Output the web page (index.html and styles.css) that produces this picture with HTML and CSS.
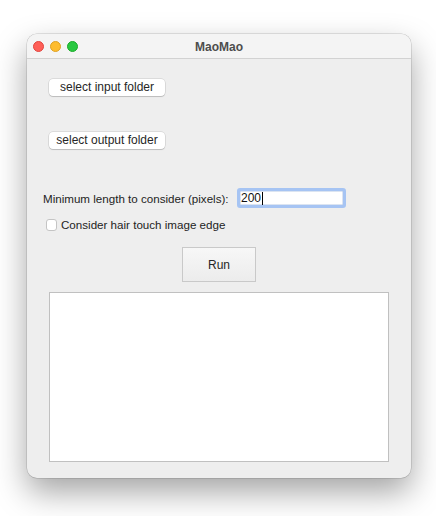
FILE: index.html
```html
<!DOCTYPE html>
<html>
<head>
<meta charset="utf-8">
<link rel="stylesheet" href="styles.css">
</head>
<body>
<div class="window">
  <div class="titlebar">
    <div class="lights">
      <span class="light red"></span>
      <span class="light yellow"></span>
      <span class="light green"></span>
    </div>
    <div class="title">MaoMao</div>
    <div></div>
  </div>
  <div class="content">
    <div class="btn btn-input">select input folder</div>
    <div class="btn btn-output">select output folder</div>
    <div class="row-length">
      <span class="label">Minimum length to consider (pixels):</span>
      <div class="field"><span class="value">200</span><span class="caret"></span></div>
    </div>
    <div class="row-check">
      <span class="checkbox"></span>
      <span class="label">Consider hair touch image edge</span>
    </div>
    <div class="run">Run</div>
    <div class="log"></div>
  </div>
</div>
</body>
</html>
```
FILE: styles.css
```css
html, body {
  margin: 0;
  padding: 0;
  background: #ffffff;
}
body {
  box-sizing: border-box;
  min-height: 516px;
  padding: 34px 0 0 27px;
  font-family: "Liberation Sans", Arial, sans-serif;
  font-size: 12px;
  color: #232323;
}
.window {
  width: 384px;
  height: 444px;
  border-radius: 10px;
  background: #eeeeee;
  box-shadow: 0 0 0 0.5px rgba(0,0,0,0.2), 0 14px 32px rgba(0,0,0,0.36);
  overflow: hidden;
  display: flex;
  flex-direction: column;
}
.titlebar {
  height: 24px;
  border-bottom: 1px solid #d2d2d2;
  background: #f4f4f4;
  display: grid;
  grid-template-columns: 1fr auto 1fr;
  align-items: center;
}
.lights {
  display: flex;
  gap: 6px;
  padding-left: 6px;
  padding-top: 1px;
}
.light {
  width: 11px;
  height: 11px;
  border-radius: 50%;
  box-sizing: border-box;
}
.red { background: #fe5f57; border: 0.5px solid #e0443e; }
.yellow { background: #febc2e; border: 0.5px solid #dea123; }
.green { background: #28c840; border: 0.5px solid #1aab29; }
.title {
  font-weight: bold;
  font-size: 12px;
  color: #4d4d4d;
  padding-top: 1px;
}
.content {
  display: flex;
  flex-direction: column;
  align-items: flex-start;
  padding: 0 22px;
}
.btn {
  width: 116px;
  height: 17px;
  line-height: 17px;
  box-sizing: border-box;
  text-align: center;
  background: #ffffff;
  border-radius: 4px;
  box-shadow: 0 0 0 0.5px rgba(0,0,0,0.16), 0 1px 1px rgba(0,0,0,0.14);
  color: #262626;
}
.btn-input { margin-top: 20px; }
.btn-output { margin-top: 36px; }
.label { font-size: 11.6px; }
.row-length {
  margin-top: 39px;
  margin-left: -6px;
  display: flex;
  align-items: center;
}
.row-length .label { width: 194px; }
.field {
  width: 109px;
  height: 20px;
  box-sizing: border-box;
  border: 3px solid #a6c4f3;
  border-radius: 3px;
  background: #ffffff;
  display: flex;
  align-items: center;
  padding-left: 1px;
  box-shadow: inset 0 0 0 0.5px #b8c9e4;
}
.value { color: #111; }
.caret {
  width: 1px;
  height: 13px;
  background: #000;
  margin-left: 1px;
}
.row-check {
  margin-top: 10px;
  margin-left: -3px;
  display: flex;
  align-items: center;
  gap: 4px;
}
.checkbox {
  width: 11px;
  height: 12px;
  box-sizing: border-box;
  border: 1px solid #c4c4c4;
  border-radius: 3px;
  background: #ffffff;
}
.run {
  align-self: center;
  margin-top: 16px;
  width: 74px;
  height: 35px;
  box-sizing: border-box;
  border: 1px solid #c9c9c9;
  background: linear-gradient(#f7f7f7, #ececec);
  display: flex;
  align-items: center;
  justify-content: center;
  color: #262626;
}
.log {
  margin-top: 10px;
  width: 340px;
  height: 170px;
  box-sizing: border-box;
  border: 1px solid #c0c0c0;
  background: #ffffff;
}
```
